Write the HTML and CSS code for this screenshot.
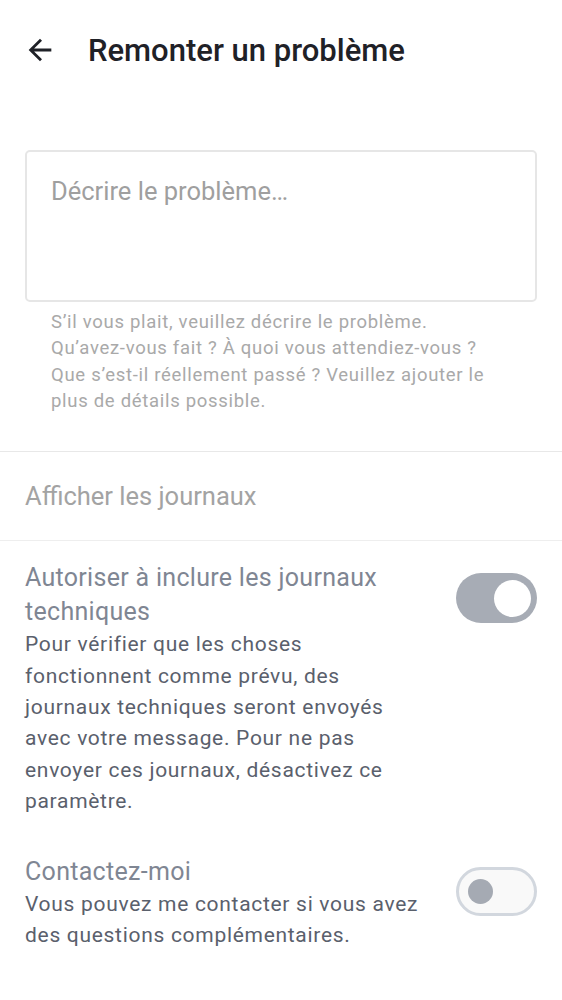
FILE: index.html
```html
<!DOCTYPE html>
<html lang="fr">
<head>
<meta charset="utf-8">
<link rel="stylesheet" href="styles.css">
</head>
<body>
<header class="topbar">
  <button class="back" aria-label="Retour">
    <svg width="34" height="34" viewBox="0 0 24 24"><path d="M20 11H7.83l5.59-5.59L12 4l-8 8 8 8 1.41-1.41L7.83 13H20v-2z" fill="#1f2127"/></svg>
  </button>
  <h1 class="title">Remonter un problème</h1>
</header>

<section class="form">
  <div class="textarea">Décrire le problème…</div>
  <p class="helper">S’il vous plait, veuillez décrire le problème. <span class="nw">Qu’avez-vous</span> fait ? À quoi vous <span class="nw">attendiez-vous</span> ? Que <span class="nw">s’est-il</span> réellement passé ? Veuillez ajouter le plus de détails possible.</p>
</section>

<div class="row-link">Afficher les journaux</div>

<div class="setting">
  <div class="setting-text">
    <div class="setting-title">Autoriser à inclure les journaux techniques</div>
    <div class="setting-desc">Pour vérifier que les choses fonctionnent comme prévu, des journaux techniques seront envoyés avec votre message. Pour ne pas envoyer ces journaux, désactivez ce paramètre.</div>
  </div>
  <div class="switch on"><span class="thumb"></span></div>
</div>

<div class="setting">
  <div class="setting-text">
    <div class="setting-title">Contactez-moi</div>
    <div class="setting-desc">Vous pouvez me contacter si vous avez des questions complémentaires.</div>
  </div>
  <div class="switch off"><span class="thumb"></span></div>
</div>
</body>
</html>
```

FILE: styles.css
```css
* { box-sizing: border-box; }
html, body { margin: 0; padding: 0; background: #fff; }
body {
  font-family: Roboto, "Noto Sans", sans-serif;
  width: 562px;
}
.topbar {
  display: flex;
  align-items: center;
  height: 100px;
  padding: 0 0 0 23px;
}
.back {
  border: 0;
  background: none;
  padding: 0;
  width: 34px;
  height: 34px;
  display: flex;
  align-items: center;
}
.title {
  margin: 0 0 0 31px;
  font-size: 31px;
  font-weight: 500;
  color: #1f2127;
  letter-spacing: 0;
}
.form {
  padding: 50px 25px 0 25px;
  border-bottom: 1px solid #e8e8e8;
}
.textarea {
  height: 152px;
  border: 2px solid #e6e6e6;
  border-radius: 5px;
  padding: 24px 24px;
  font-size: 25.5px;
  color: #9f9f9f;
}
.helper {
  margin: 7px 0 0 0;
  padding: 0 32px 37px 26px;
  font-size: 18.5px;
  line-height: 26.3px;
  letter-spacing: 0.7px;
  color: #a9a9a9;
}
.nw { white-space: nowrap; }
.row-link {
  height: 89px;
  display: flex;
  align-items: center;
  padding: 0 25px;
  font-size: 25.5px;
  color: #a3a3a3;
  border-bottom: 1px solid #eeeeee;
}
.setting {
  display: flex;
  align-items: flex-start;
  padding: 20px 25px 0 25px;
  gap: 28px;
}
.setting + .setting { padding-top: 37px; }
.setting-text { flex: 1; }
.setting-title {
  font-size: 25px;
  line-height: 34px;
  color: #7f8693;
  letter-spacing: 0.3px;
}
.setting-desc {
  font-size: 21px;
  line-height: 31.4px;
  color: #5a606c;
  letter-spacing: 0.7px;
}
.switch {
  position: relative;
  width: 81px;
  height: 50px;
  border-radius: 25px;
  flex: none;
  margin-top: 12px;
}
.switch.on { background: #a7acb5; }
.switch.off { background: #f9f9f9; border: 3px solid #d2d7de; height: 49px; }
.thumb {
  position: absolute;
  border-radius: 50%;
}
.switch.on .thumb {
  width: 37px; height: 37px;
  background: #fff;
  right: 6px; top: 6.5px;
}
.switch.off .thumb {
  width: 25px; height: 25px;
  background: #a5aab3;
  left: 9px; top: 9px;
}
```
